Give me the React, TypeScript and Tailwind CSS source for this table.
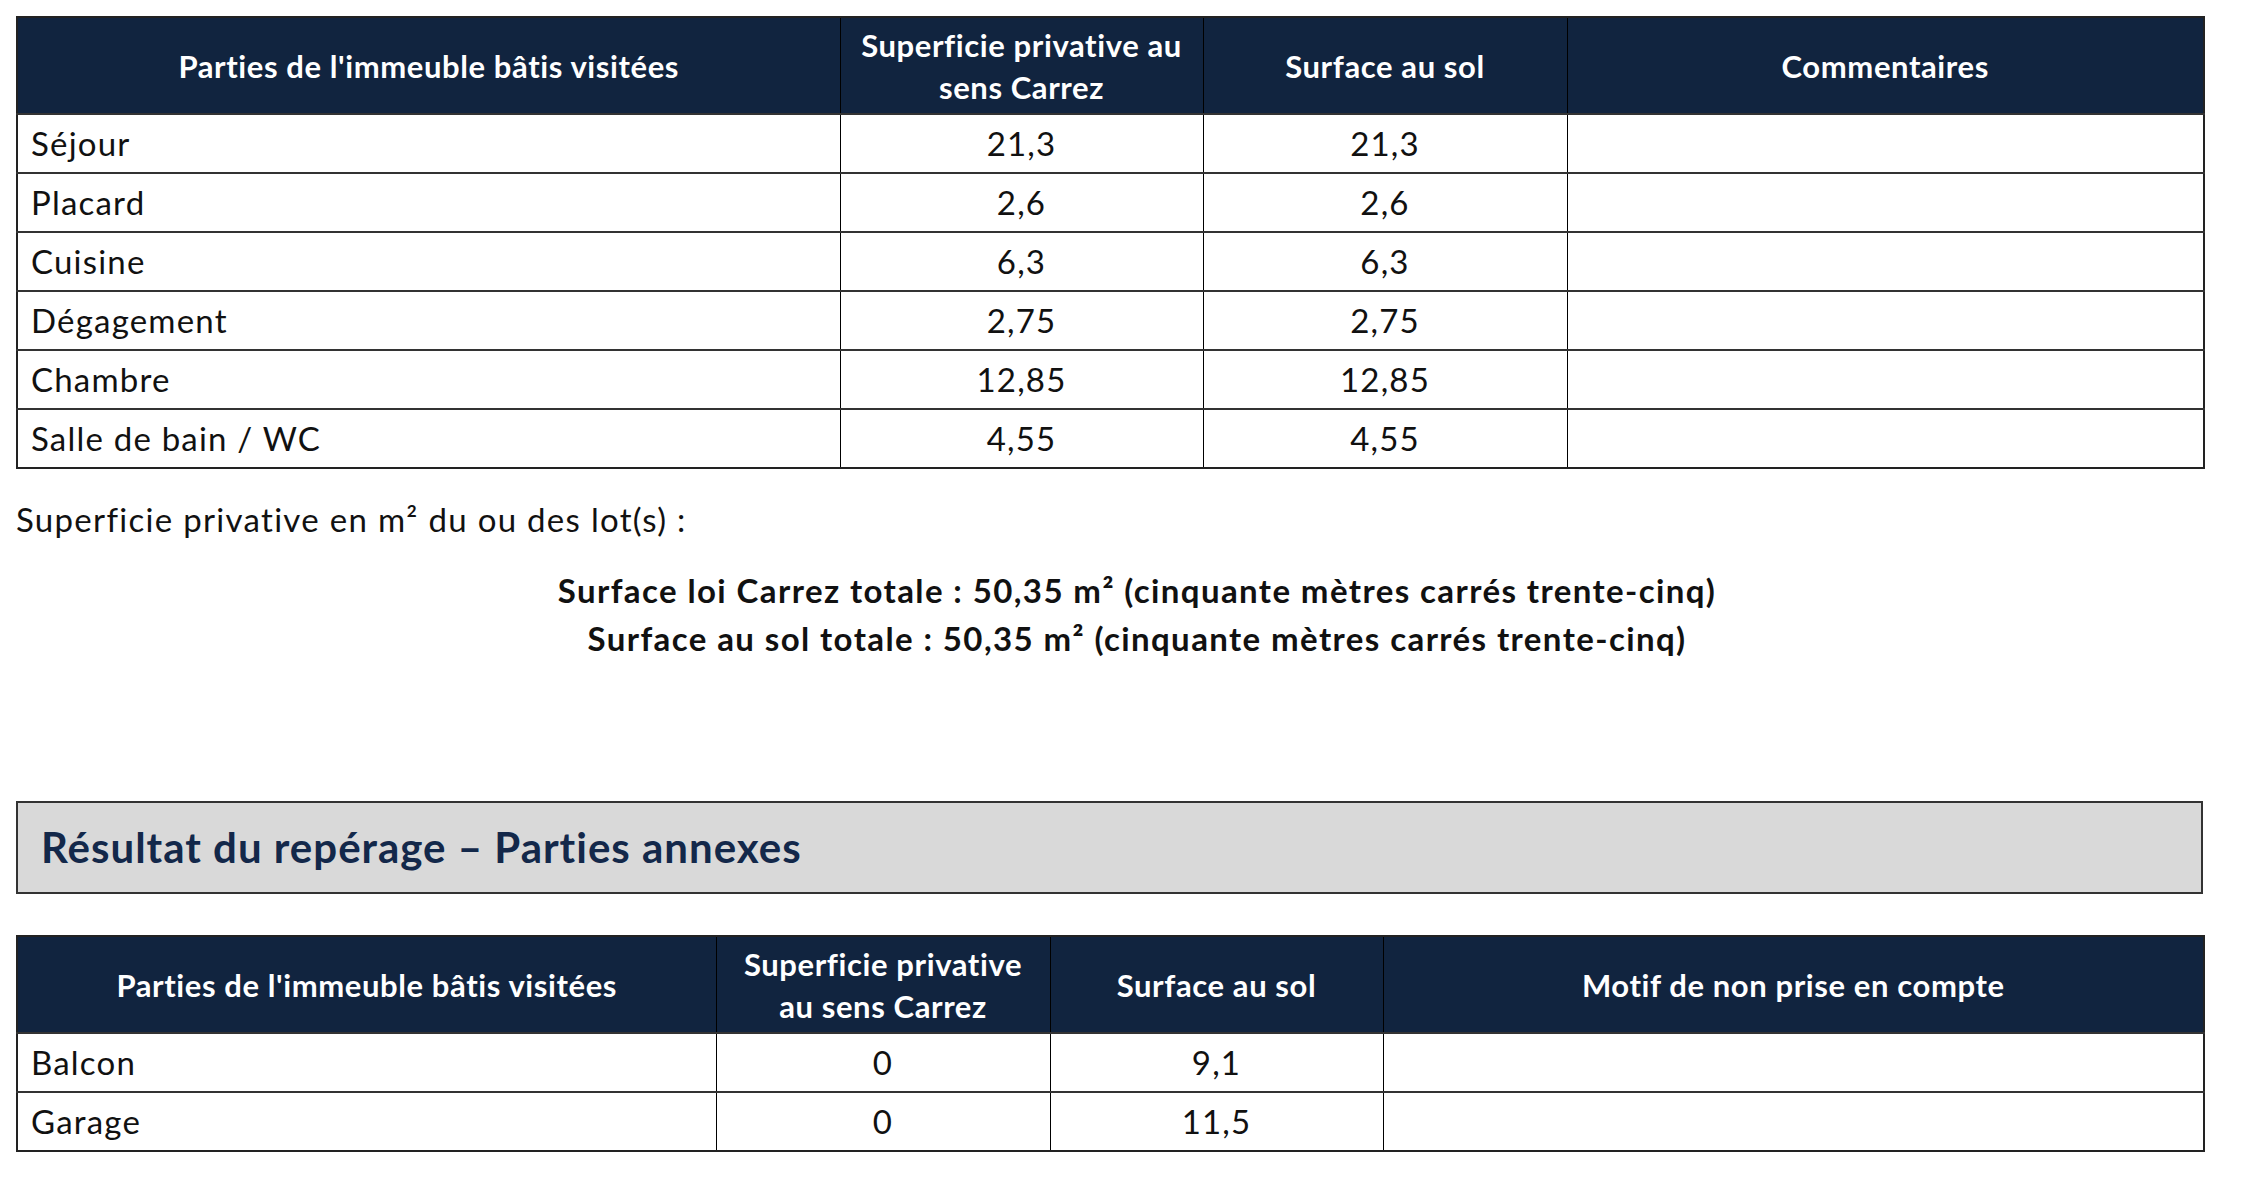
const font = { fontFamily: 'Lato, "Open Sans", sans-serif' };

const rooms = [
  { name: 'Séjour', carrez: '21,3', sol: '21,3' },
  { name: 'Placard', carrez: '2,6', sol: '2,6' },
  { name: 'Cuisine', carrez: '6,3', sol: '6,3' },
  { name: 'Dégagement', carrez: '2,75', sol: '2,75' },
  { name: 'Chambre', carrez: '12,85', sol: '12,85' },
  { name: 'Salle de bain / WC', carrez: '4,55', sol: '4,55' },
];

const annexes = [
  { name: 'Balcon', carrez: '0', sol: '9,1' },
  { name: 'Garage', carrez: '0', sol: '11,5' },
];

type Row = { name: string; carrez: string; sol: string };

const SurfaceTable = ({
  widths,
  headers,
  rows,
}: {
  widths: number[];
  headers: React.ReactNode[];
  rows: Row[];
}) => {
  return (
    <table className="border-collapse table-fixed w-[2187px] border-2 border-[#222]">
      <colgroup>
        {widths.map((w, i) => (
          <col key={i} style={{ width: w }} />
        ))}
      </colgroup>
      <thead>
        <tr className="h-[97px] bg-[#11243f]">
          {headers.map((h, i) => (
            <th
              key={i}
              className="border-x border-black text-white font-bold text-[31px] leading-[42px] tracking-[0.6px] text-center px-1"
            >
              {h}
            </th>
          ))}
        </tr>
      </thead>
      <tbody>
        {rows.map(r => (
          <tr key={r.name} className="h-[59px] border-t-2 border-[#333]">
            <td className="border-x border-black pl-[13px] text-[33px] tracking-[1.2px] text-[#111]">{r.name}</td>
            <td className="border-x border-black text-center text-[33px] tracking-[1.2px] text-[#111]">{r.carrez}</td>
            <td className="border-x border-black text-center text-[33px] tracking-[1.2px] text-[#111]">{r.sol}</td>
            <td className="border-x border-black"></td>
          </tr>
        ))}
      </tbody>
    </table>
  );
};

export default function App() {
  return (
    <div className="w-[2265px] h-[1200px] bg-white pl-4 pt-4" style={font}>
      <SurfaceTable
        widths={[823, 363, 364, 637]}
        headers={[
          "Parties de l'immeuble bâtis visitées",
          <>
            Superficie privative au
            <br />
            sens Carrez
          </>,
          'Surface au sol',
          'Commentaires',
        ]}
        rows={rooms}
      />

      <p className="mt-[30px] text-[33px] leading-[40px] tracking-[1.3px] text-[#111]">
        Superficie privative en m² du ou des lot(s) :
      </p>

      <div className="mt-[27px] w-[2187px] pl-[55px] text-center font-bold text-[33px] leading-[48px] tracking-[1.4px] text-[#111]">
        <p>Surface loi Carrez totale : 50,35 m² (cinquante mètres carrés trente-cinq)</p>
        <p>Surface au sol totale : 50,35 m² (cinquante mètres carrés trente-cinq)</p>
      </div>

      <div className="mt-[139px] w-[2187px] h-[93px] bg-[#d9d9d9] border-2 border-[#333] flex items-center pl-[23px]">
        <h2 className="text-[42px] font-bold text-[#13284a] tracking-[1px]">
          Résultat du repérage – Parties annexes
        </h2>
      </div>

      <div className="mt-[41px]">
        <SurfaceTable
          widths={[699, 334, 333, 821]}
          headers={[
            "Parties de l'immeuble bâtis visitées",
            <>
              Superficie privative
              <br />
              au sens Carrez
            </>,
            'Surface au sol',
            'Motif de non prise en compte',
          ]}
          rows={annexes}
        />
      </div>
    </div>
  );
}
